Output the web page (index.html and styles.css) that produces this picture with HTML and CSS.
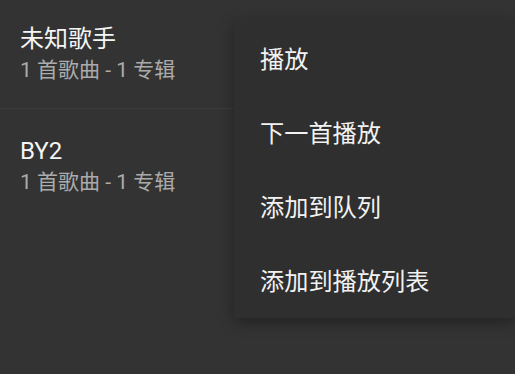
FILE: index.html
```html
<!DOCTYPE html>
<html lang="zh-CN">
<head>
<meta charset="UTF-8">
<meta name="viewport" content="width=device-width, initial-scale=1.0">
<title>歌手</title>
<link rel="stylesheet" href="styles.css">
</head>
<body>
<div class="list">
    <div class="row">
        <div class="title">未知歌手</div>
        <div class="subtitle">1 首歌曲 - 1 专辑</div>
    </div>
    <div class="row">
        <div class="title">BY2</div>
        <div class="subtitle">1 首歌曲 - 1 专辑</div>
    </div>
</div>

<ul class="menu">
    <li>播放</li>
    <li>下一首播放</li>
    <li>添加到队列</li>
    <li>添加到播放列表</li>
</ul>
</body>
</html>
```

FILE: styles.css
```css
body {
    margin: 0;
    width: 515px;
    height: 374px;
    overflow: hidden;
    background-color: #333333;
    font-family: Roboto, "Noto Sans CJK SC", sans-serif;
    position: relative;
}

.list {
    margin-top: -3px;
}

.row {
    height: 112px;
    box-sizing: border-box;
    padding: 26px 20px 0;
    border-bottom: 1px solid #3d3d3d;
}

.row:last-child {
    border-bottom: none;
}

.title {
    font-size: 24px;
    line-height: 32px;
    color: #f5f5f5;
}

.subtitle {
    font-size: 21px;
    line-height: 30px;
    color: #ababab;
}

.menu {
    position: absolute;
    top: 20px;
    left: 234px;
    right: 0;
    margin: 0;
    padding: 3px 0 0;
    list-style: none;
    background-color: #2f2f2f;
    box-shadow: 0 4px 14px rgba(0, 0, 0, 0.35);
    height: 298px;
    box-sizing: border-box;
}

.menu li {
    height: 74px;
    line-height: 74px;
    padding-left: 26px;
    font-size: 24.2px;
    color: #f2f2f2;
}
```
